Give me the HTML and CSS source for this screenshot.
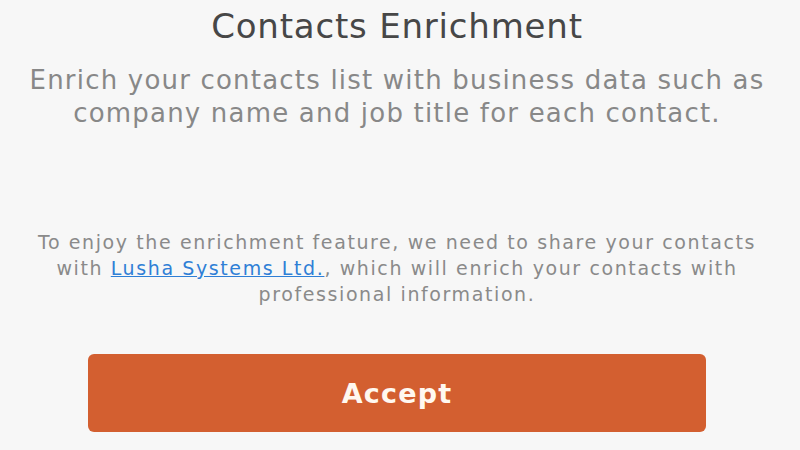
FILE: index.html
```html
<!doctype html>
<html lang="en">

<head>
	<meta charset="UTF-8">
	<title>Contacts Enrichment</title>
	<link rel="stylesheet" href="styles.css">
</head>

<body>
	<div class="Screen">
		<h1 class="Title">Contacts Enrichment</h1>
		<p class="Lead">Enrich your contacts list with business data such as<br />company name and job title for each contact.</p>
		<p class="Notice">To enjoy the enrichment feature, we need to share your contacts<br />with <a href="#">Lusha Systems Ltd.</a>, which will enrich your contacts with<br />professional information.</p>
		<button class="Accept">Accept</button>
	</div>
</body>

</html>
```
FILE: styles.css
```css
html,
body {
	margin: 0;
	height: 100%;
	background-color: #f7f7f7;
}

body {
	font-family: "DejaVu Sans", "Liberation Sans", sans-serif;
	overflow: hidden;
}

div.Screen {
	display: flex;
	flex-direction: column;
	align-items: center;
	padding-right: 6px;
	text-align: center;
}

h1.Title {
	margin: 6px 0 0 0;
	font-size: 34px;
	font-weight: normal;
	letter-spacing: 0.8px;
	line-height: 40px;
	color: #474747;
}

p.Lead {
	margin: 18px 0 0 0;
	font-size: 26px;
	letter-spacing: 1.2px;
	line-height: 33px;
	color: #888888;
}

p.Notice {
	margin: 99px 0 0 0;
	font-size: 19px;
	letter-spacing: 1.6px;
	line-height: 26px;
	color: #8a8a8a;
}

p.Notice a {
	color: #2f7fd6;
}

button.Accept {
	margin: 47px 0 0 0;
	width: 618px;
	height: 78px;
	border: 0;
	border-radius: 6px;
	background-color: #d35f30;
	color: #fff8f0;
	font-family: inherit;
	font-size: 27px;
	font-weight: bold;
	letter-spacing: 1.2px;
}
```
